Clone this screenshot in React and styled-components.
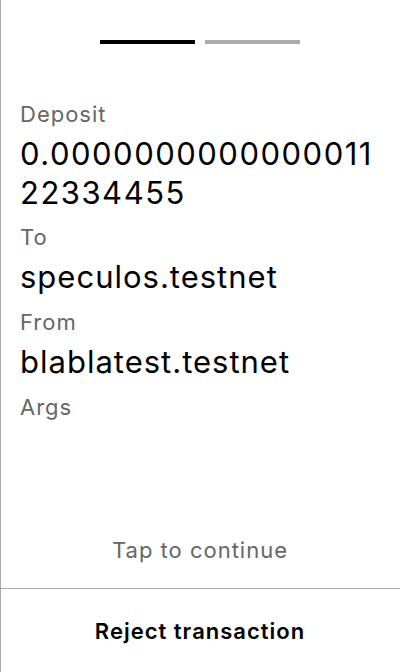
import styled, {createGlobalStyle} from "styled-components";

const GlobalStyle = createGlobalStyle`
  html, body {
    margin: 0;
    padding: 0;
    background: #FFFFFF;
  }

  body {
    font-family: Inter, "Noto Sans", sans-serif;
    -webkit-font-smoothing: antialiased;
  }
`;

const Screen = styled.div`
  width: 400px;
  height: 672px;
  box-sizing: border-box;
  box-shadow: inset 1px 0 0 #AAAAAA;
  display: flex;
  flex-direction: column;
  background: #FFFFFF;
`;

const Progress = styled.div`
  display: flex;
  justify-content: center;
  gap: 10px;
  padding-top: 40px;
`;

const Step = styled.div`
  width: 95px;
  height: 4px;
  background: ${p => p.active ? '#000000' : '#AAAAAA'};
`;

const Body = styled.div`
  flex: 1;
  padding: 44px 20px 0 20px;
`;

const Label = styled.div`
  font-size: 22px;
  line-height: 24px;
  letter-spacing: 1px;
  padding: 14px 0 8px;
  color: #666666;
`;

const Value = styled.div`
  font-size: 31px;
  line-height: 39px;
  letter-spacing: ${p => p.$numeric ? 1.5 : 1}px;
  color: #000000;
  word-break: break-all;
  margin-bottom: ${p => p.$numeric ? -1 : 0}px;
`;

const TapHint = styled.div`
  text-align: center;
  font-size: 22px;
  line-height: 24px;
  letter-spacing: 1px;
  color: #666666;
  padding-bottom: 26px;
`;

const Footer = styled.div`
  border-top: 1px solid #AAAAAA;
  height: 83px;
  display: flex;
  align-items: center;
  justify-content: center;
  font-size: 22px;
  font-weight: 600;
  letter-spacing: 1px;
  color: #000000;
`;

const fields = [
  {label: "Deposit", value: "0.000000000000001122334455", numeric: true},
  {label: "To", value: "speculos.testnet"},
  {label: "From", value: "blablatest.testnet"},
];

const App = () => {
  return (
    <Screen>
      <GlobalStyle/>
      <Progress>
        <Step active/>
        <Step/>
      </Progress>
      <Body>
        {
          fields.map(x => (
            <div key={x.label}>
              <Label>{x.label}</Label>
              <Value $numeric={x.numeric}>{x.value}</Value>
            </div>
          ))
        }
        <Label>Args</Label>
      </Body>
      <TapHint>Tap to continue</TapHint>
      <Footer>Reject transaction</Footer>
    </Screen>
  )
};

export default App;
